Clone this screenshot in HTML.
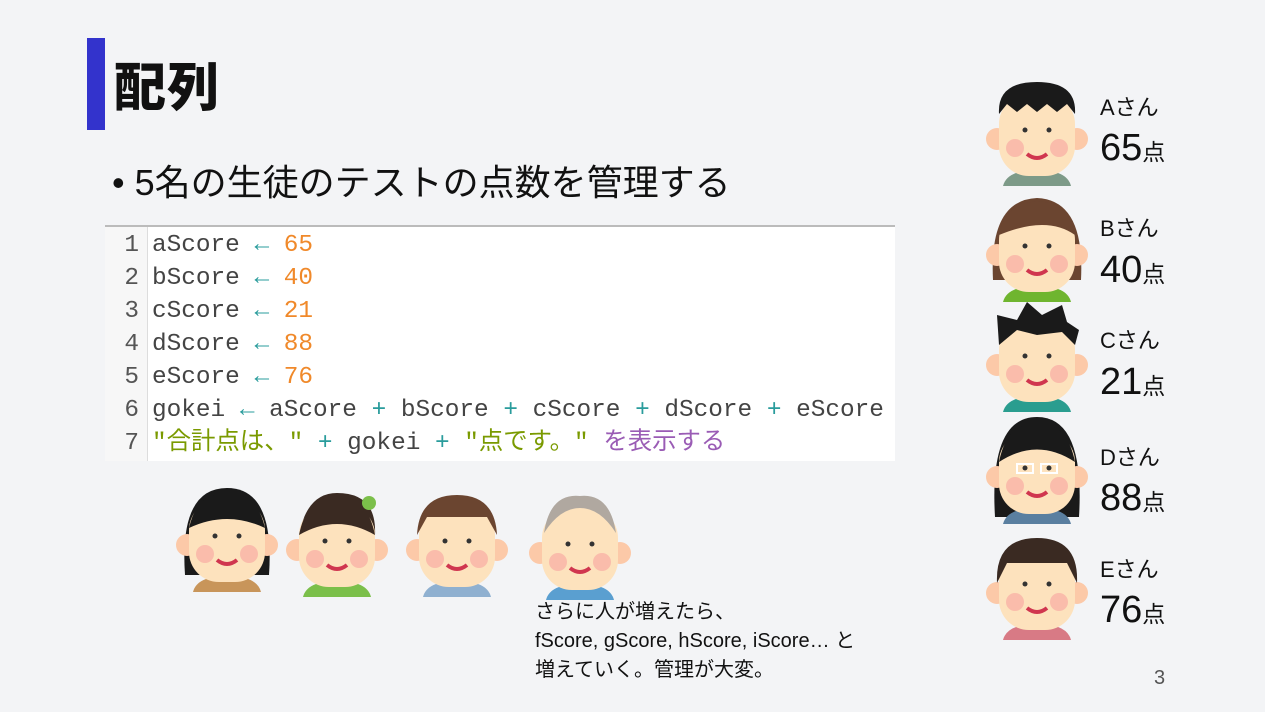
<!DOCTYPE html>
<html><head><meta charset="utf-8"><style>
body{margin:0;width:1265px;height:712px;background:#f3f4f6;position:relative;overflow:hidden;font-family:"Liberation Sans","Noto Sans CJK JP",sans-serif;color:#111}
.a{position:absolute}
.code{left:105px;top:225px;width:790px;height:234px;background:#fff;border-top:2px solid #bbb;font-family:"Liberation Mono","Noto Sans CJK JP",monospace;font-size:24.4px;color:#444}
.gut{position:absolute;left:0;top:0;width:42px;height:234px;border-right:1px solid #ddd;background:#f7f7f7}
.ln{position:absolute;left:0;height:33px;line-height:33px;white-space:pre}
.n{width:34px;text-align:right;color:#555}
.o{color:#f0892a}.t{color:#2a9c9c}.s{color:#7a9a00}.p{color:#9a5cb5}
.lab{left:1100px;font-size:22px;color:#111;line-height:1}
.sc{left:1100px;font-size:38px;line-height:1}
.sc span{font-size:23px}
</style></head><body>
<div class="a" style="left:87px;top:38px;width:18px;height:92px;background:#3333cc"></div>
<div class="a" style="left:114px;top:46px;font-size:52px;font-weight:900;letter-spacing:1px">配列</div>
<div class="a" style="left:112px;top:154px;font-size:36px">• 5名の生徒のテストの点数を管理する</div>
<div class="a code"><div class="gut"></div>
<div class="ln n" style="top:2px">1</div><div class="ln" style="top:2px;left:47px">aScore <span class="t">←</span> <span class="o">65</span></div>
<div class="ln n" style="top:35px">2</div><div class="ln" style="top:35px;left:47px">bScore <span class="t">←</span> <span class="o">40</span></div>
<div class="ln n" style="top:68px">3</div><div class="ln" style="top:68px;left:47px">cScore <span class="t">←</span> <span class="o">21</span></div>
<div class="ln n" style="top:101px">4</div><div class="ln" style="top:101px;left:47px">dScore <span class="t">←</span> <span class="o">88</span></div>
<div class="ln n" style="top:134px">5</div><div class="ln" style="top:134px;left:47px">eScore <span class="t">←</span> <span class="o">76</span></div>
<div class="ln n" style="top:167px">6</div><div class="ln" style="top:167px;left:47px">gokei <span class="t">←</span> aScore <span class="t">+</span> bScore <span class="t">+</span> cScore <span class="t">+</span> dScore <span class="t">+</span> eScore</div>
<div class="ln n" style="top:200px">7</div><div class="ln" style="top:200px;left:47px"><span class="s">"合計点は、"</span> <span class="t">+</span> gokei <span class="t">+</span> <span class="s">"点です。"</span> <span class="p">を表示する</span></div>
</div>

<svg class="a" style="left:0;top:0" width="1265" height="712">
<defs>
<g id="f">
<path d="M-34 52 Q-30 36 0 36 Q30 36 34 52Z" fill="currentColor"/>
<circle cx="-40" cy="5" r="11" fill="#fcc9a8"/><circle cx="40" cy="5" r="11" fill="#fcc9a8"/>
<rect x="-38" y="-40" width="76" height="82" rx="30" fill="#fde2bd"/>
<circle cx="-22" cy="14" r="9" fill="#f9b3a6" opacity=".8"/><circle cx="22" cy="14" r="9" fill="#f9b3a6" opacity=".8"/>
<path d="M-10 20 Q0 28 10 20" stroke="#d0364f" stroke-width="4" fill="none"/>
<circle cx="-12" cy="-4" r="2.5" fill="#333"/><circle cx="12" cy="-4" r="2.5" fill="#333"/>
</g>
</defs>
<g transform="translate(1037,134)" color="#7d9a88"><use href="#f"/><path d="M-38 -20 Q-40 -52 0 -52 Q40 -52 38 -20 L30 -30 L20 -22 L10 -30 L0 -22 L-10 -30 L-20 -22 L-30 -30Z" fill="#1a1a1a"/></g>
<g transform="translate(1037,250)" color="#6fb52f"><path d="M-44 30 Q-48 -50 0 -52 Q48 -50 44 30 Z" fill="#6b4530"/><use href="#f"/><path d="M-38 -15 Q-30 -50 0 -48 Q30 -50 38 -15 Q10 -35 -38 -15Z" fill="#6b4530"/></g>
<g transform="translate(1037,360)" color="#2a9d8f"><use href="#f"/><path d="M-38 -15 L-40 -45 L-20 -40 L-10 -58 L5 -45 L25 -55 L30 -38 L42 -30 L38 -15 L25 -28 L0 -25 L-20 -30Z" fill="#1a1a1a"/></g>
<g transform="translate(1037,472)" color="#5a7fa0"><path d="M-42 45 Q-48 -55 0 -55 Q48 -55 42 45 Z" fill="#1a1a1a"/><use href="#f"/><path d="M-38 -10 Q-30 -50 0 -48 Q30 -50 38 -10 Q0 -35 -38 -10Z" fill="#1a1a1a"/><rect x="-20" y="-8" width="16" height="9" fill="none" stroke="#fff" stroke-width="2"/><rect x="4" y="-8" width="16" height="9" fill="none" stroke="#fff" stroke-width="2"/></g>
<g transform="translate(1037,588)" color="#d87a85"><use href="#f"/><path d="M-40 -5 Q-42 -50 0 -50 Q42 -50 40 -5 L30 -25 L-30 -25Z" fill="#3a2a22"/></g>

<g transform="translate(227,540)" color="#c8955a"><path d="M-42 35 Q-48 -52 0 -52 Q48 -52 42 35 Z" fill="#1a1a1a"/><use href="#f"/><path d="M-38 -12 Q-30 -48 0 -46 Q30 -48 38 -12 Q0 -30 -38 -12Z" fill="#1a1a1a"/></g>
<g transform="translate(337,545)" color="#7bbf4a"><path d="M-38 -10 Q-30 -52 0 -52 Q40 -52 38 -10Z" fill="#3a2a22"/><use href="#f"/><path d="M-38 -10 Q-30 -50 0 -48 Q30 -50 38 -10 Q0 -32 -38 -10Z" fill="#3a2a22"/><circle cx="32" cy="-42" r="7" fill="#7bbf4a"/></g>
<g transform="translate(457,545)" color="#8fb0d0"><use href="#f"/><path d="M-40 -10 Q-38 -50 0 -50 Q38 -50 40 -10 L30 -28 L-30 -28Z" fill="#6b4530"/></g>
<g transform="translate(580,548)" color="#5a9fd0"><use href="#f"/><path d="M-36 -15 Q-30 -55 0 -52 Q30 -55 36 -15 Q20 -40 0 -40 Q-20 -40 -36 -15Z" fill="#b0a8a0"/></g>
</svg>

<div class="a lab" style="top:97px">Aさん</div><div class="a sc" style="top:129px">65<span>点</span></div>
<div class="a lab" style="top:218px">Bさん</div><div class="a sc" style="top:251px">40<span>点</span></div>
<div class="a lab" style="top:330px">Cさん</div><div class="a sc" style="top:363px">21<span>点</span></div>
<div class="a lab" style="top:447px">Dさん</div><div class="a sc" style="top:479px">88<span>点</span></div>
<div class="a lab" style="top:559px">Eさん</div><div class="a sc" style="top:591px">76<span>点</span></div>

<div class="a" style="left:535px;top:598px;font-size:20px;line-height:29px">さらに人が増えたら、<br>fScore, gScore, hScore, iScore… と<br>増えていく。管理が大変。</div>
<div class="a" style="left:1154px;top:667px;font-size:20px;color:#555">3</div>
</body></html>
